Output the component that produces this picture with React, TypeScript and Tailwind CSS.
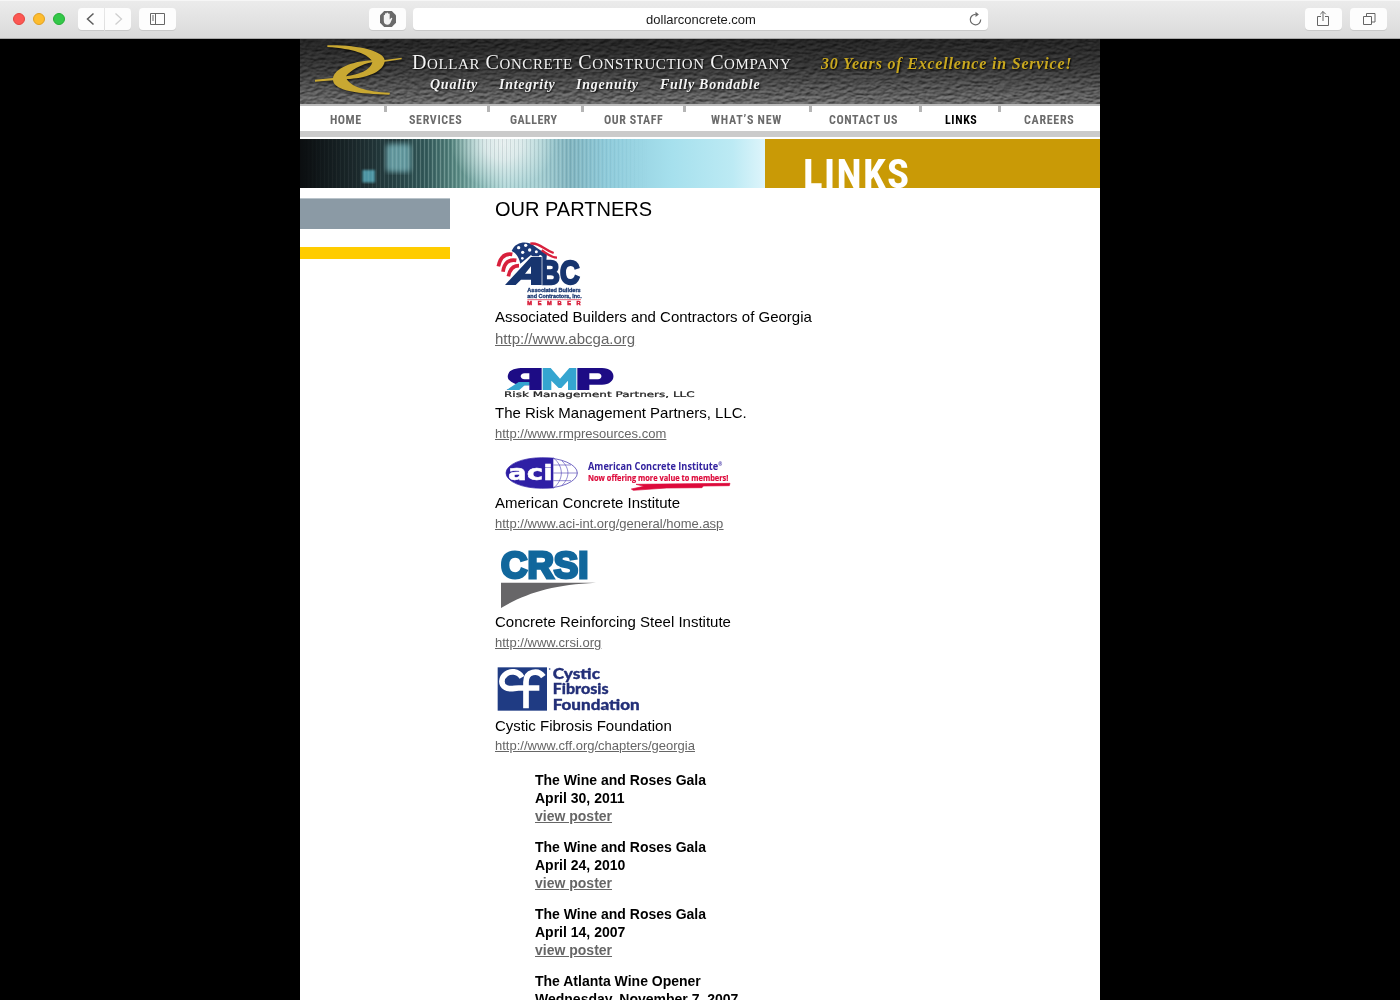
import type { ReactNode } from 'react';

function BrowserBar() {
  return (
    <div className="flex h-[39px] shrink-0 items-center border-b border-[#a9a9a9] bg-linear-to-b from-[#ececec] to-[#dadada] px-[13px] shadow-[inset_0_1px_0_#f6f6f6]">
      <div className="flex gap-2">
        <span className="size-3 rounded-full border border-[#e2463f] bg-[#fc5753]" />
        <span className="size-3 rounded-full border border-[#dfa023] bg-[#fdbc2e]" />
        <span className="size-3 rounded-full border border-[#24ae35] bg-[#33c748]" />
      </div>
      <div className="ml-[13px] flex gap-px">
        <BarButton className="w-[26px] rounded-l">
          <svg width="26" height="22" fill="none" stroke="#5c5c5c" strokeWidth="1.5"><path d="M15.5 5.5 9.5 11l6 5.5" /></svg>
        </BarButton>
        <BarButton className="w-[26px] rounded-r">
          <svg width="26" height="22" fill="none" stroke="#cfcfcf" strokeWidth="1.3"><path d="m10.5 5.5 6 5.5-6 5.5" /></svg>
        </BarButton>
      </div>
      <BarButton className="ml-2 w-[37px] rounded">
        <svg width="37" height="22" fill="none" stroke="#666" strokeWidth="1">
          <path d="M11.5 5.5h14v11h-14zM16.500 5.500v11M13 8h2M13 10h2M13 12h2" />
        </svg>
      </BarButton>
      <BarButton className="ml-[193px] w-[37px] rounded">
        <svg width="37" height="22">
          <path d="M15.200 3h7.600l4.200 4.200v7.600L22.800 19h-7.600L11 14.800V7.200z" fill="#6a6a6a" />
          <path d="M14.800 11V7.200q.6-.8 1.200 0V5.600q.7-.9 1.500 0v-.7q.8-.9 1.600 0v.9q.8-.8 1.600 0V11.600l1.400-1.700q1-.4 1.200.6l-2 4.500q-.8 1.800-2.500 1.800-4 0-4-4z" fill="#f4f4f4" />
        </svg>
      </BarButton>
      <div className="ml-[7px] flex h-[22px] w-[575px] items-center rounded bg-white text-[13px] text-[#1a1a1a] shadow-[0_1px_0_#c9c9c9]">
        <span className="w-[575px] pt-px pl-[21px] text-center">dollarconcrete.com</span>
        <svg className="mr-[5px] shrink-0" width="15" height="16" fill="none" stroke="#6b6b6b" strokeWidth="1.200">
          <path d="M7.800 3.400A5.200 5.200 0 1 0 12.700 8.600" />
          <path d="M7.500 .8v5.200l3.400-2.600z" fill="#6b6b6b" stroke="none" />
        </svg>
      </div>
      <BarButton className="ml-[317px] w-[37px] rounded">
        <svg width="36" height="22" fill="none" stroke="#666" strokeWidth="1">
          <path d="M16 8.500h-3.500v9h11v-9H20M18 13V3.500M15.300 6.200 18 3.500l2.700 2.700" />
        </svg>
      </BarButton>
      <BarButton className="ml-[8px] w-[37px] rounded">
        <svg width="36" height="22" fill="none" stroke="#666" strokeWidth="1">
          <path d="M13.500 8.500h8v8h-8zM16.500 8.500v-3h8.500v8.500h-3.500" />
        </svg>
      </BarButton>
    </div>
  );
}

function BarButton({ className, children }: { className: string; children: ReactNode }) {
  return <div className={`h-[22px] shrink-0 bg-[#fdfdfd] shadow-[0_1px_0_#c9c9c9] ${className}`}>{children}</div>;
}

function Masthead() {
  return (
    <header className="relative flex h-[65px] overflow-hidden">
      <svg className="absolute inset-0" width="800" height="65">
        <defs>
          <linearGradient id="slate" x1="0" y1="0" x2="0" y2="1">
            <stop offset="0" stopColor="#242424" />
            <stop offset=".45" stopColor="#383838" />
            <stop offset="1" stopColor="#6a6a6a" />
          </linearGradient>
          <filter id="grain" x="0" y="0" width="100%" height="100%" colorInterpolationFilters="sRGB">
            <feTurbulence type="fractalNoise" baseFrequency=".16 .34" numOctaves="3" seed="7" />
            <feDiffuseLighting lightingColor="#fff" surfaceScale="1.500" diffuseConstant=".8">
              <feDistantLight azimuth="250" elevation="38" />
            </feDiffuseLighting>
          </filter>
        </defs>
        <rect width="800" height="65" fill="url(#slate)" />
        <rect className="mix-blend-overlay" width="800" height="65" filter="url(#grain)" opacity=".55" />
      </svg>
      <svg className="relative ml-[14px] mt-[3px] shrink-0" width="92" height="56" viewBox="42 18 276 168">
        <path
          fillRule="evenodd"
          fill="#c9a832"
          className="drop-shadow-[2px_4px_3px_rgba(0,0,0,0.700)]"
          d="M82 28C170 26 250 44 254 72L305 65V70L254 77C247 110 195 127 140 129C152 150 195 168 270 170L268 176C180 174 102 166 99 133L45 137V131L99 126C104 98 155 76 215 73C200 54 162 38 82 33ZM138 121C175 117 212 102 217 79C185 84 150 104 138 121Z"
        />
      </svg>
      <div className="relative ml-[6px] w-[409px] whitespace-nowrap font-['Liberation_Serif'] text-[#f4f4f4] [text-shadow:1px_1px_2px_#000]">
        <p className="mt-[12px] h-[22px] text-[15px] leading-[22px] tracking-[0.600px] [word-spacing:1.1px]">
          <span className="text-[20px]">D</span>OLLAR <span className="text-[20px]">C</span>ONCRETE <span className="text-[20px]">C</span>ONSTRUCTION <span className="text-[20px]">C</span>OMPANY
        </p>
        <p className="ml-[18px] mt-[2px] flex text-[14px] leading-5 font-bold italic tracking-[0.750px]">
          <span className="w-[69px]">Quality</span>
          <span className="w-[77px]">Integrity</span>
          <span className="w-[84px]">Ingenuity</span>
          <span>Fully Bondable</span>
        </p>
      </div>
      <p className="relative mt-[14px] whitespace-nowrap font-['Liberation_Serif'] text-[16px] leading-[22px] font-bold italic tracking-[0.800px] text-[#c9a81f] [text-shadow:1px_1px_2px_#000]">
        30 Years of Excellence in Service!
      </p>
    </header>
  );
}

const NAV = [
  { label: 'HOME', cell: 'w-[87px] pl-[30px]', ls: 'tracking-[0.500px]' },
  { label: 'SERVICES', cell: 'w-[103px] pl-[22px]', ls: 'tracking-[0.650px]' },
  { label: 'GALLERY', cell: 'w-[94px] pl-[20px]', ls: 'tracking-[0.450px]' },
  { label: 'OUR STAFF', cell: 'w-[102px] pl-[20px]', ls: 'tracking-[0.550px]' },
  { label: 'WHAT’S NEW', cell: 'w-[126px] pl-[25px]', ls: 'tracking-[0.750px]' },
  { label: 'CONTACT US', cell: 'w-[110px] pl-[17px]', ls: 'tracking-[0.600px]' },
  { label: 'LINKS', cell: 'w-[79px] pl-[23px]', ls: 'tracking-[0.600px] text-black' },
  { label: 'CAREERS', cell: 'w-[99px] pl-[23px]', ls: 'tracking-[0.700px]' },
];

function Nav() {
  return (
    <nav className="mb-[2px] flex h-[33px] border-t-2 border-b-6 border-t-[#bababa] border-b-[#cbcbcb] bg-white font-['Roboto'] text-[12px] font-bold text-[#6b6b6b] [font-stretch:75%]">
      {NAV.map((n, i) => (
        <div key={n.label} className={`flex shrink-0 justify-between whitespace-nowrap ${n.cell}`}>
          <a className={`h-[25px] pt-px leading-[27px] ${n.ls}`}>{n.label}</a>
          {i < NAV.length - 1 && <span className="h-[6px] w-[3px] bg-[#b5b5b5]" />}
        </div>
      ))}
    </nav>
  );
}

function Banner() {
  return (
    <div className="flex h-[49px]">
      <svg width="465" height="49" className="shrink-0">
        <defs>
          <linearGradient id="sky">
            <stop offset="0" stopColor="#0b0e10" />
            <stop offset=".12" stopColor="#1b282b" />
            <stop offset=".2" stopColor="#263f42" />
            <stop offset=".27" stopColor="#34595a" />
            <stop offset=".34" stopColor="#5c8c86" />
            <stop offset=".39" stopColor="#8ab9b7" />
            <stop offset=".44" stopColor="#b0d6d8" />
            <stop offset=".51" stopColor="#a8d0d4" />
            <stop offset=".58" stopColor="#82b5c1" />
            <stop offset=".66" stopColor="#8fcbdb" />
            <stop offset=".8" stopColor="#a6e0ed" />
            <stop offset=".93" stopColor="#bceaf4" />
            <stop offset="1" stopColor="#def5fb" />
          </linearGradient>
          <radialGradient id="flare">
            <stop offset="0" stopColor="#ebf1f2" />
            <stop offset=".35" stopColor="#e4eeef" stopOpacity=".9" />
            <stop offset="1" stopColor="#d4e8e8" stopOpacity="0" />
          </radialGradient>
          <linearGradient id="fade">
            <stop offset="0" stopColor="#000" />
            <stop offset=".15" stopColor="#444" />
            <stop offset=".3" stopColor="#ddd" />
            <stop offset=".58" stopColor="#999" />
            <stop offset=".75" stopColor="#000" />
          </linearGradient>
          <pattern id="bars" width="4" height="49" patternUnits="userSpaceOnUse">
            <rect width="1" height="49" fill="#d6f0e8" opacity=".32" />
            <rect x="2" width="1" height="49" fill="#0f3434" opacity=".16" />
          </pattern>
          <mask id="barMask"><rect width="465" height="49" fill="url(#fade)" /></mask>
          <filter id="soft"><feGaussianBlur stdDeviation="2.500" /></filter>
          <filter id="soft2"><feGaussianBlur stdDeviation="1.200" /></filter>
        </defs>
        <rect width="465" height="49" fill="url(#sky)" />
        <ellipse cx="203" cy="4" rx="52" ry="48" fill="url(#flare)" />
        <rect x="86" y="5" width="25" height="28" rx="4" fill="#6fa9b0" opacity=".85" filter="url(#soft)" />
        <rect x="62.500" y="31" width="12.500" height="12.500" fill="#4f97a6" filter="url(#soft2)" />
        <rect width="465" height="49" fill="url(#bars)" mask="url(#barMask)" />
      </svg>
      <h1 className="h-[49px] w-[335px] overflow-hidden bg-[#c99a06] pl-[38px] font-['Roboto'] text-[41px] leading-[70px] font-bold tracking-[1.400px] text-white [font-stretch:75%]">
        LINKS
      </h1>
    </div>
  );
}

function AbcLogo() {
  return (
    <svg width="110" height="66" viewBox="30 15 330 198" fontFamily="Liberation Sans, sans-serif" fontWeight="bold">
      <path d="M80 48C92 18 128 18 144 30C160 42 170 50 186 54L184 78L150 72L138 60L106 86C102 68 94 54 80 48Z" fill="#1c3a78" />
      <g fill="#fff">
        <circle cx="101" cy="38" r="5" /><circle cx="122" cy="31" r="5" /><circle cx="113" cy="52" r="5" />
        <circle cx="134" cy="45" r="5" /><circle cx="112" cy="70" r="4" /><circle cx="154" cy="50" r="4.500" /><circle cx="166" cy="64" r="4" />
      </g>
      <g fill="none" stroke="#d8203c" strokeWidth="11">
        <path d="M40 94C46 66 60 54 82 58" /><path d="M54 110C58 82 72 72 94 76" /><path d="M70 124C74 104 84 92 102 92" />
        <path d="M136 26C164 22 176 44 206 54" strokeWidth="7" /><path d="M170 46C186 56 198 68 216 68" strokeWidth="7" />
      </g>
      <g fill="#17356f">
        <text x="166" y="147" fontSize="102" stroke="#17356f" strokeWidth="7" textLength="118" lengthAdjust="spacingAndGlyphs">BC</text>
        <path d="M60 150 138 66H170L170 150H138V134H108L92 150ZM120 116H138V94Z" fillRule="evenodd" stroke="#fff" strokeWidth="4" paintOrder="stroke" />
      </g>
      <g fill="#17356f" stroke="#17356f" strokeWidth=".8" fontSize="16">
        <text x="127" y="171" textLength="160" lengthAdjust="spacingAndGlyphs">Associated Builders</text>
        <text x="127" y="188" textLength="163" lengthAdjust="spacingAndGlyphs">and Contractors, Inc.</text>
      </g>
      <path d="M127 194H288" stroke="#d8203c" strokeWidth="2" />
      <text x="127" y="211" fontSize="17" fill="#d8203c" stroke="#d8203c" strokeWidth="1.500" textLength="160">MEMBER</text>
    </svg>
  );
}

function RmpLogo() {
  return (
    <svg width="220" height="52" viewBox="15 -30 660 156">
      <g fill="#1d0c85">
        <path fillRule="evenodd" d="M155 24V90H118V76H98L72 90H50L82 74C62 68 50 58 54 44C58 28 80 24 100 24ZM118 40H104C88 40 88 58 104 58H118Z" />
        <path fillRule="evenodd" d="M262 24H336C382 24 382 74 336 74H298V90H262ZM298 40V58H324C338 58 338 40 324 40Z" />
      </g>
      <g fill="#35a5d0">
        <path d="M158 24H182L210 56L238 24H259V90H234V62L214 84H206L184 62V90H158Z" />
        <path d="M50 90 86 66H118V76H104L88 90Z" />
      </g>
      <text x="42" y="112" fontSize="23" fontFamily="DejaVu Sans, sans-serif" fill="#222" stroke="#222" strokeWidth=".7" textLength="572" lengthAdjust="spacingAndGlyphs">Risk Management Partners, LLC</text>
    </svg>
  );
}

function AciLogo() {
  return (
    <svg width="280" height="48" viewBox="15 -18 840 144" fontWeight="bold">
      <ellipse cx="155" cy="69" rx="107" ry="46" fill="#fff" stroke="#2f1fa5" strokeWidth="2" />
      <path d="M155 23C95 23 48 44 48 69S95 115 155 115H190V23Z" fill="#2f1fa5" />
      <g fill="none" stroke="#4a3cb4" strokeWidth="1.800">
        <path d="M190 23C222 50 222 88 190 115M190 45H243M190 69H262M190 92H243M215 32C240 55 240 83 215 107" />
      </g>
      <text x="54" y="89" fontSize="66" fill="#fff" stroke="#fff" strokeWidth="1.500" fontFamily="DejaVu Sans, sans-serif" textLength="134" lengthAdjust="spacingAndGlyphs">aci</text>
      <g fontFamily="Open Sans, sans-serif">
        <text x="294" y="59" fontSize="32" fill="#33229f" textLength="403" lengthAdjust="spacingAndGlyphs">American Concrete Institute<tspan fontSize="17" dy="-10">®</tspan></text>
        <text x="294" y="94" fontSize="28" fill="#dd0a3b" stroke="#dd0a3b" strokeWidth=".6" textLength="421" lengthAdjust="spacingAndGlyphs">Now offering more value to members!</text>
      </g>
      <path d="M438 103 720 100 718 107 640 108 636 113 530 114 430 121 424 117 462 109Z" fill="#dd0a3b" stroke="#dd0a3b" strokeWidth="2" />
    </svg>
  );
}

function CrsiLogo() {
  return (
    <svg width="110" height="77" viewBox="15 -18 330 231">
      <text x="33" y="115" fontSize="110" fontWeight="bold" fontFamily="Liberation Sans, sans-serif" fill="#11679c" stroke="#11679c" strokeWidth="9" textLength="262" lengthAdjust="spacingAndGlyphs">CRSI</text>
      <path d="M33 128H318C190 134 110 158 33 204Z" fill="#676668" />
    </svg>
  );
}

function CffLogo() {
  return (
    <svg width="160" height="62" viewBox="15 -21 480 186">
      <rect x="23" y="22" width="148" height="130" fill="#1f3b83" />
      <g fill="none" stroke="#fff" strokeWidth="17">
        <path d="M96 52C84 32 60 32 48 42C32 54 32 74 46 82C58 90 72 84 86 84H148" />
        <path d="M108 145V66C108 34 144 28 160 50" />
      </g>
      <circle cx="179" cy="27" r="2.500" fill="#1f3b83" />
      <g fill="#232f78" stroke="#232f78" strokeWidth="1" fontSize="47" fontWeight="900" fontFamily="Lato, sans-serif">
        <text x="188" y="56" textLength="142" lengthAdjust="spacingAndGlyphs">Cystic</text>
        <text x="188" y="103" textLength="168" lengthAdjust="spacingAndGlyphs">Fibrosis</text>
        <text x="188" y="150" textLength="261" lengthAdjust="spacingAndGlyphs">Foundation</text>
      </g>
    </svg>
  );
}

const PARTNERS = [
  { logo: <AbcLogo />, name: 'Associated Builders and Contractors of Georgia', url: 'http://www.abcga.org', link: 'h-[22px] leading-[22px] text-[15px]' },
  { logo: <RmpLogo />, name: 'The Risk Management Partners, LLC.', url: 'http://www.rmpresources.com', link: 'h-5 leading-5 text-[13px]' },
  { logo: <AciLogo />, name: 'American Concrete Institute', url: 'http://www.aci-int.org/general/home.asp', link: 'h-5 leading-5 text-[13px]' },
  { logo: <CrsiLogo />, name: 'Concrete Reinforcing Steel Institute', url: 'http://www.crsi.org', link: 'h-5 leading-5 text-[13px]' },
  { logo: <CffLogo />, name: 'Cystic Fibrosis Foundation', url: 'http://www.cff.org/chapters/georgia', link: 'h-[18px] leading-[18px] text-[13px]' },
];

const EVENTS = [
  ['The Wine and Roses Gala', 'April 30, 2011'],
  ['The Wine and Roses Gala', 'April 24, 2010'],
  ['The Wine and Roses Gala', 'April 14, 2007'],
  ['The Atlanta Wine Opener', 'Wednesday, November 7, 2007'],
];

export default function App() {
  return (
    <div className="flex h-[1000px] w-[1400px] flex-col overflow-hidden bg-black font-['Liberation_Sans',sans-serif] text-black">
      <BrowserBar />
      <div className="mx-auto flex min-h-0 w-[800px] flex-1 flex-col overflow-hidden bg-white">
        <div className="shrink-0">
          <Masthead />
          <Nav />
          <Banner />
        </div>
        <div className="flex items-start">
          <aside className="w-[150px] pt-[10px]">
            <div className="h-[31px] border-t border-[#b9c3ca] bg-[#8b9aa5]" />
            <div className="mt-[18px] h-3 bg-[#ffcc00]" />
          </aside>
          <main className="ml-[45px]">
            <h2 className="h-[52px] pt-[7px] text-[20px] leading-[28px]">OUR PARTNERS</h2>
            {PARTNERS.map((p) => (
              <section key={p.url}>
                <div className="[&>svg]:block">{p.logo}</div>
                <p className="h-[22px] text-[15px] leading-[22px]">{p.name}</p>
                <p className={`text-[#666] underline ${p.link}`}><a>{p.url}</a></p>
              </section>
            ))}
            <div className="mt-4 ml-10 text-[14px] leading-[18px] font-bold">
              {EVENTS.map(([title, date]) => (
                <div key={date} className="mb-[13px]">
                  <p>{title}</p>
                  <p>{date}</p>
                  <a className="block text-[#666] underline">view poster</a>
                </div>
              ))}
            </div>
          </main>
        </div>
      </div>
    </div>
  );
}
